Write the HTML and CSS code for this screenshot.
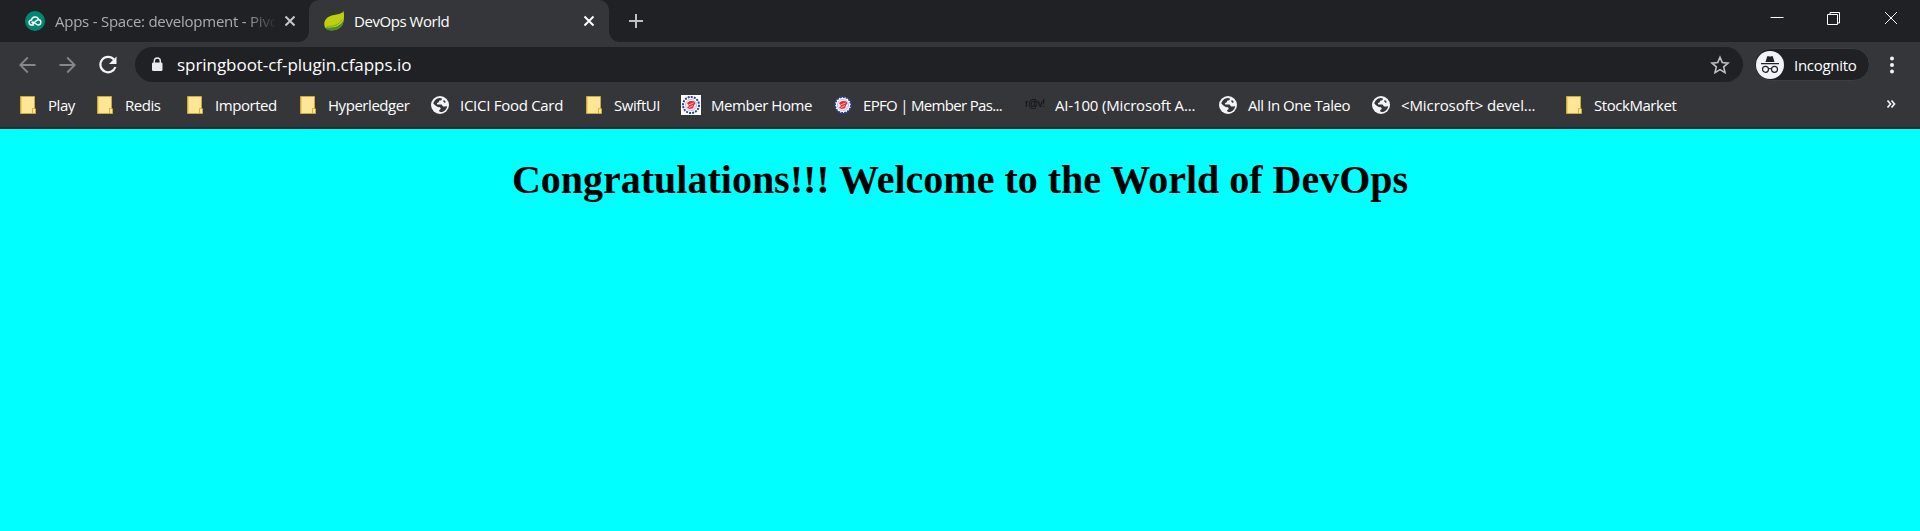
FILE: index.html
```html
<!DOCTYPE html>
<html lang="en">
<head>
<meta charset="utf-8">
<title>DevOps World</title>
<link rel="stylesheet" href="styles.css">
</head>
<body>
<svg class="defs" width="0" height="0" aria-hidden="true">
  <symbol id="folder" viewBox="0 0 20 20">
    <path d="M2.500 1.500h14v11.500l1 1v4.500h-15z" fill="#ffe596" stroke="#c9a83c"/>
    <path d="M14.500 18v-4.500h2.500" fill="none" stroke="#d9b23c"/>
    <path d="M3.500 2v16" stroke="#f4cf62"/>
  </symbol>
  <symbol id="globe" viewBox="0 0 20 20">
    <circle cx="10" cy="10" r="9" fill="#f1f3f4"/>
    <path d="M3.300 8.500C4 5.300 6.500 3 9.800 2.900l2.200.5c-.2 1.500-1 2.100-2.500 2.200-.5.200-.3 1.300-.8 1.700-.5.500-1.700.4-1.800 1.100-.1.900.6 1.200 1.700 1.200h2.700c1 .1 1 1.600 1.900 1.900 1.200.3 2.500-.4 3.900-.1-.5 3-3 5.500-6.500 5.700-1-.2-1.500-.7-1.500-1.500.1-1 1.400-.8 1.600-2.100 0-1.300-1.700-1.200-2.700-1.500-1.400-.3-3-1.800-4.700-3.500z" fill="#35363a"/>
    <path d="M13.500 5.500l1.800 2" stroke="#35363a" stroke-width="1.500"/>
  </symbol>
  <symbol id="seal" viewBox="0 0 20 20">
    <circle cx="10" cy="10" r="8" fill="#fff" stroke="#263f99" stroke-width="2" stroke-dasharray="2 1.100"/>
    <circle cx="10" cy="10" r="5.600" fill="#f3e8f0" stroke="#a9acd9" stroke-width=".7"/>
    <path d="M6 8l3-2 4 .3 1.500 2-1.500 2-1 3-3.500.7L6 12.500l2-1.500z" fill="#ee2735"/>
    <path d="M7.500 10l5-2M8 12.500l4-2" stroke="#fff" stroke-width=".7"/>
  </symbol>
</svg>

<header class="browser">
  <div class="tabstrip">
    <div class="tab">
      <svg class="favicon" viewBox="0 0 20 20"><circle cx="10" cy="10" r="10" fill="#008774"/><path d="M8.500 14H6.700a2.500 2.500 0 0 1-.2-5C7 5 13 4.800 13.700 8.800c3 .4 2.800 5.200-.5 5.200-2.500 0-3.700-4.200-6.200-2.600M8 12.500c2-.2 2.500-3.500 5-3.600" fill="none" stroke="#fff" stroke-width="1.500" stroke-linecap="round"/></svg>
      <span class="tab-title faded">Apps - Space: development - Pivo</span>
      <svg class="close" viewBox="0 0 12 12"><path d="M1.500 1.500l9 9m0-9l-9 9"/></svg>
    </div>
    <div class="tab active">
      <svg class="favicon" viewBox="0 0 20 20"><path d="M19.500 0C18 4 8 3 3.500 6.500-.5 9.500-.5 15 2 17.500c5 3.500 14 1.500 16.500-4C20 10 20.500 5 19.500 0z" fill="#bfcf10"/><path d="M19.500 9C17 15 11 17 2 16.600c-.5 1.900 1 2.600 3.500 2.900C13 20 19.500 16 19.500 9z" fill="#4c8b31"/><path d="M3 15.500c7 0 12-2 15-7" fill="none" stroke="#7eae20"/></svg>
      <span class="tab-title">DevOps World</span>
      <svg class="close" viewBox="0 0 12 12"><path d="M1.500 1.500l9 9m0-9l-9 9"/></svg>
    </div>
    <svg class="plus" viewBox="0 0 16 16"><path d="M8 1v14M1 8h14"/></svg>
    <div class="window-buttons">
      <svg viewBox="0 0 14 14"><path d="M.5 5.500h13"/></svg>
      <svg viewBox="0 0 14 14"><path d="M.5 2.500h10v10H.5zM3 2V.5h9.500V11H11"/></svg>
      <svg viewBox="0 0 14 14"><path d="M1 0l12 12m0-12L1 12"/></svg>
    </div>
  </div>

  <div class="toolbar">
    <svg class="nav" viewBox="0 0 20 20"><path d="M17.500 10H2.500m7.300-7.500L2.300 10l7.500 7.500"/></svg>
    <svg class="nav" viewBox="0 0 20 20"><path d="M1.500 10h15M9.200 2.500l7.500 7.500-7.500 7.500"/></svg>
    <svg class="nav reload" viewBox="0 0 20 20"><path d="M16 4.600A7.700 7.700 0 1 0 17.400 12"/><path class="tip" d="M18.500 1.500V9H11z"/></svg>
    <div class="omnibox">
      <svg class="lock" viewBox="0 0 12 16"><rect x="1" y="5.500" width="10.500" height="8.500" rx="1.200" fill="#e8eaed"/><path d="M3.300 6V4a3 3 0 0 1 6 0v2" fill="none" stroke="#e8eaed" stroke-width="1.400"/></svg>
      <span class="url">springboot-cf-plugin.cfapps.io</span>
      <svg class="star" viewBox="0 0 20 20"><path d="M10 2.300l2.300 5.300 5.700.5-4.300 3.800 1.300 5.700-5-3-5 3 1.300-5.700L2 8.100l5.700-.5z"/></svg>
    </div>
    <div class="profile">
      <svg viewBox="0 0 28 28"><circle cx="14" cy="14" r="14" fill="#f1f3f4"/><path d="M9.500 11L11 6q.4-1.200 1.500-.8 1.500.6 3 0Q16.600 4.800 17 6l1.500 5zM5 12h18v1.300H5z" fill="#202124"/><circle cx="9.500" cy="18.300" r="3" fill="none" stroke="#202124" stroke-width="1.200"/><circle cx="18.500" cy="18.300" r="3" fill="none" stroke="#202124" stroke-width="1.200"/><path d="M12.400 18q1.600-1 3.200 0" fill="none" stroke="#202124" stroke-width="1.200"/></svg>
      <span>Incognito</span>
    </div>
    <svg class="menu" viewBox="0 0 4 18"><circle cx="2" cy="2.500" r="2"/><circle cx="2" cy="9" r="2"/><circle cx="2" cy="15.500" r="2"/></svg>
  </div>

  <nav class="bookmarks">
    <a class="bm play"><svg><use href="#folder"/></svg><span>Play</span></a>
    <a class="bm redis"><svg><use href="#folder"/></svg><span>Redis</span></a>
    <a class="bm imported"><svg><use href="#folder"/></svg><span>Imported</span></a>
    <a class="bm hyper"><svg><use href="#folder"/></svg><span>Hyperledger</span></a>
    <a class="bm icici"><svg><use href="#globe"/></svg><span>ICICI Food Card</span></a>
    <a class="bm swift"><svg><use href="#folder"/></svg><span>SwiftUI</span></a>
    <a class="bm member"><svg class="white"><use href="#seal"/></svg><span>Member Home</span></a>
    <a class="bm epfo"><svg><use href="#seal"/></svg><span>EPFO | Member Pas...</span></a>
    <a class="bm ai"><i class="ravi">r@v!</i><span>AI-100 (Microsoft A...</span></a>
    <a class="bm taleo"><svg><use href="#globe"/></svg><span>All In One Taleo</span></a>
    <a class="bm msdev"><svg><use href="#globe"/></svg><span>&lt;Microsoft&gt; devel...</span></a>
    <a class="bm stock"><svg><use href="#folder"/></svg><span>StockMarket</span></a>
    <svg class="more" viewBox="0 0 10 10"><path d="M1.500 1.500L4.500 5l-3 3.500M5.500 1.500l3 3.500-3 3.500"/></svg>
  </nav>
</header>

<main class="page">
  <h1>Congratulations!!! Welcome to the World of DevOps</h1>
</main>
</body>
</html>
```
FILE: styles.css
```css
* { box-sizing: border-box; }

body {
  margin: 0;
  height: 531px;
  overflow: hidden;
  display: flex;
  flex-direction: column;
  background: #00ffff;
}

svg { display: block; flex: none; }
.defs { position: absolute; }

.browser {
  height: 129px;
  flex: none;
  background: #35363a;
  border-bottom: 2px solid #28292c;
  font-family: "Open Sans", "Noto Sans", sans-serif;
  font-size: 15px;
  line-height: 20px;
  color: #fff;
  white-space: nowrap;
}

/* Tab strip */
.tabstrip {
  display: flex;
  height: 42px;
  background: #202124;
}

.tab {
  display: flex;
  align-items: center;
  width: 309px;
  padding: 0 13px 0 25px;
  color: #a9adb2;
}

.tab.active {
  position: relative;
  width: 300px;
  padding: 0 14px 0 15px;
  background: #35363a;
  border-radius: 10px 10px 0 0;
  color: #fff;
}

.tab.active::before,
.tab.active::after {
  content: "";
  position: absolute;
  bottom: 0;
  width: 10px;
  height: 10px;
}

.tab.active::before {
  left: -10px;
  background: radial-gradient(circle at 0 0, #202124 9.500px, #35363a 10px);
}

.tab.active::after {
  right: -10px;
  background: radial-gradient(circle at 100% 0, #202124 9.500px, #35363a 10px);
}

.favicon { width: 20px; height: 20px; margin-right: 10px; }

.tab-title {
  flex: 1;
  letter-spacing: -0.45px;
}

.faded {
  flex: 0 0 220px;
  min-width: 0;
  margin-right: 9px;
  letter-spacing: -0.24px;
  -webkit-mask-image: linear-gradient(to right, #000 190px, transparent 222px);
  mask-image: linear-gradient(to right, #000 190px, transparent 222px);
}

.close { width: 12px; height: 12px; fill: none; stroke: #c5c8cb; stroke-width: 2; }
.active .close { stroke: #fff; }

.plus {
  width: 16px;
  height: 16px;
  margin: 13px 0 0 19px;
  fill: none;
  stroke: #bdc1c6;
  stroke-width: 2;
}

.window-buttons {
  display: flex;
  gap: 43px;
  margin: 12px 22px 0 auto;
}

.window-buttons svg { width: 14px; height: 14px; fill: none; stroke: #fff; }

/* Toolbar */
.toolbar {
  display: flex;
  align-items: center;
  height: 45px;
  padding: 0 26px 0 18px;
}

.nav {
  width: 20px;
  height: 20px;
  margin-right: 20px;
  fill: none;
  stroke: #85878a;
  stroke-width: 1.8;
}

.reload { margin-right: 17px; stroke: #f1f3f4; stroke-width: 2.2; }
.reload .tip { fill: #f1f3f4; stroke: none; }

.omnibox {
  display: flex;
  align-items: center;
  width: 1608px;
  height: 35px;
  padding: 0 13px 0 16px;
  border-radius: 18px;
  background: #202124;
  font-size: 17px;
}

.lock { width: 12px; height: 16px; }

.url {
  margin-left: 14px;
  letter-spacing: -0.05px;
}

.star {
  width: 20px;
  height: 20px;
  margin-left: auto;
  fill: none;
  stroke: #bdc1c6;
  stroke-width: 1.6;
}

.profile {
  display: flex;
  align-items: center;
  gap: 10px;
  width: 116px;
  height: 33px;
  margin-left: 11px;
  padding-left: 1px;
  border: 1px solid #3c3d41;
  border-radius: 17px;
  background: #202124;
  letter-spacing: -0.3px;
}

.profile svg { width: 28px; height: 28px; }

.menu { width: 4px; height: 18px; margin-left: auto; fill: #f1f3f4; }

/* Bookmarks bar */
.bookmarks {
  display: flex;
  height: 38px;
  padding: 8px 24px 0 18px;
}

.bm {
  display: flex;
  gap: 10px;
  flex: none;
  letter-spacing: -0.45px;
}

.bm svg { width: 20px; height: 20px; }
.bm .white { background: #fff; }

.ravi {
  width: 20px;
  font: 10px/17px "Liberation Sans", sans-serif;
  letter-spacing: -0.4px;
  color: #0c0d0e;
}

.play { width: 77px; }
.redis { width: 90px; }
.imported { width: 113px; }
.hyper { width: 132px; }
.icici { width: 154px; letter-spacing: -0.28px; }
.swift { width: 97px; }
.member { width: 152px; }
.epfo { width: 192px; letter-spacing: -0.68px; }
.ai { width: 193px; letter-spacing: -0.17px; }
.taleo { width: 153px; }
.msdev { width: 193px; letter-spacing: -0.1px; }

.more {
  width: 10px;
  height: 10px;
  margin: 4px 0 0 auto;
  fill: none;
  stroke: #f1f3f4;
  stroke-width: 1.7;
}

/* Page content */
.page h1 {
  margin: 28px 0 0;
  font: bold 40px/46px "Liberation Serif", "Times New Roman", serif;
  text-align: center;
  color: #000;
}
```
